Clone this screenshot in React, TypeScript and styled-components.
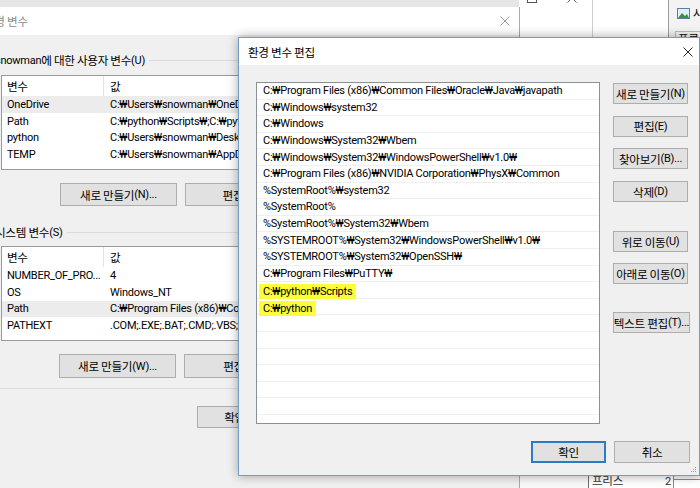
import React from "react";
import styled, { createGlobalStyle } from "styled-components";

const GlobalStyle = createGlobalStyle`
  html, body {
    margin: 0;
    padding: 0;
  }
  body {
    font-family: Roboto, "Noto Sans CJK KR", sans-serif;
    font-size: 11px;
    letter-spacing: -0.25px;
    color: #000;
  }
`;

const Desktop = styled.div`
  position: relative;
  width: 700px;
  height: 488px;
  overflow: hidden;
  background: #e6e6e6;
`;

// Hangul runs get the Korean face, like Malgun Gothic next to Segoe UI
const Ko = styled.span`
  font-family: "Noto Sans CJK KR", sans-serif;
  font-size: 11.6px;
  letter-spacing: -0.3px;
`;

function T({ children }: { children: string }) {
  const parts = children.split(/([가-힣]+(?: [가-힣]+)*)/);
  return <>{parts.map((part, i) => (i % 2 ? <Ko key={i}>{part}</Ko> : part))}</>;
}

/* ---------- explorer window on the right, mostly hidden ---------- */

const Explorer = styled.div`
  position: absolute;
  left: 519px;
  top: -10px;
  width: 190px;
  height: 498px;
  display: flex;
  flex-direction: column;
  background: #fff;
`;

const ExplorerColumns = styled.div`
  flex: 1;
  display: flex;
`;

const Pane = styled.div<{ $width?: number; $bg?: string; $line?: string }>`
  width: ${(p) => (p.$width ? `${p.$width}px` : "auto")};
  flex: ${(p) => (p.$width ? "none" : "1")};
  background: ${(p) => p.$bg || "#fff"};
  border-right: 1px solid ${(p) => p.$line || "#d6d6d6"};
  display: flex;
  flex-direction: column;
`;

const CaptionGlyphs = styled.div`
  height: 13px;
  display: flex;
  align-items: flex-end;
  gap: 30px;
  padding-left: 8px;
`;

const RibbonItem = styled.div`
  margin-top: 16px;
  padding-left: 8px;
  display: flex;
  align-items: center;
  gap: 3px;
  height: 14px;
`;

const RibbonButton = styled.div`
  margin: 11px 0 0 6px;
  height: 16px;
  width: 40px;
  border: 1px solid #b9b9b9;
  background: #f4f4f4;
  line-height: 12px;
  padding-left: 2px;
  overflow: hidden;
`;

const SheetRow = styled.div`
  height: 16px;
  display: flex;
  background: #f7f7f7;
`;

const SheetCell = styled.div<{ $width?: number }>`
  width: ${(p) => (p.$width ? `${p.$width}px` : "auto")};
  flex: ${(p) => (p.$width ? "none" : "1")};
  border-right: 1px solid #8a8a8a;
  display: flex;
  justify-content: space-between;
  align-items: flex-end;
  padding: 0 2px 0 3px;
  color: #333;
  background: #fff;
`;

const EmptyCell = styled.div`
  width: 69px;
  border-right: 1px solid #6f6f6f;
  background: #f9f9f9;
`;

const LastCell = styled.div`
  flex: 1;
  margin-top: 7px;
  border-top: 1px solid #8a8a8a;
  background: #fff;
`;

/* ---------- shared window parts ---------- */

const TitleBar = styled.div<{ $height: number; $inactive?: boolean }>`
  height: ${(p) => p.$height}px;
  flex: none;
  background: #fff;
  display: flex;
  align-items: center;
  justify-content: space-between;
  color: ${(p) => (p.$inactive ? "#8a8a8a" : "#000")};
`;

const TitleText = styled.span<{ $pad: number }>`
  padding-left: ${(p) => p.$pad}px;
`;

const CloseGlyph = styled.svg<{ $right: number }>`
  margin-right: ${(p) => p.$right}px;
  flex: none;
`;

const Button = styled.div<{ $width?: number; $height?: number; $default?: boolean }>`
  box-sizing: border-box;
  width: ${(p) => p.$width ?? 75}px;
  height: ${(p) => p.$height ?? 22}px;
  flex: none;
  background: #e1e1e1;
  border: 1px solid ${(p) => (p.$default ? "#2d7bc4" : "#adadad")};
  box-shadow: ${(p) => (p.$default ? "inset 0 0 0 1px #2d7bc4" : "none")};
  display: flex;
  align-items: center;
  justify-content: center;
  white-space: nowrap;
  overflow: hidden;
`;

/* ---------- environment variables window (behind) ---------- */

const EnvWindow = styled.div`
  position: absolute;
  left: -24px;
  top: 7px;
  width: 544px;
  height: 490px;
  box-sizing: border-box;
  border-right: 1px solid #a9a9a9;
  background: #f0f0f0;
  display: flex;
  flex-direction: column;
`;

const GroupLabel = styled.div<{ $top: number }>`
  margin-top: ${(p) => p.$top}px;
  height: 16px;
  padding-left: 19px;
  padding-right: 12px;
  display: flex;
  align-items: center;
  white-space: nowrap;

  &::after {
    content: "";
    flex: 1;
    margin-left: 4px;
    border-top: 1px solid #dadada;
  }
`;

const VarTable = styled.div<{ $top: number }>`
  margin: ${(p) => p.$top}px 12px 0 25px;
  height: 95px;
  box-sizing: border-box;
  border: 1px solid #9a9a9a;
  background: #fff;
  overflow: hidden;
`;

const VarRow = styled.div<{ $header?: boolean; $selected?: boolean }>`
  height: ${(p) => (p.$header ? 20 : 16.8)}px;
  display: grid;
  grid-template-columns: 102px 1fr;
  background: ${(p) => (p.$selected ? "#ececec" : "#fff")};
`;

const VarCell = styled.div<{ $divider?: boolean }>`
  padding-left: ${(p) => (p.$divider ? 6 : 5)}px;
  display: flex;
  align-items: center;
  white-space: nowrap;
  overflow: hidden;
`;

const HeaderCell = styled(VarCell)`
  border-right: 1px solid #e3e3e3;
  &:last-child {
    border-right: none;
  }
`;

const ButtonRow = styled.div<{ $top: number; $left: number }>`
  margin-top: ${(p) => p.$top}px;
  padding-left: ${(p) => p.$left}px;
  display: flex;
  gap: 8px;
`;

const Separator = styled.div`
  margin: 10px 12px 0 12px;
  border-top: 1px solid #dcdcdc;
`;

/* ---------- edit dialog (front) ---------- */

const Dialog = styled.div`
  position: absolute;
  left: 238px;
  top: 37px;
  width: 462px;
  height: 439px;
  box-sizing: border-box;
  border: 1px solid #6f9fc6;
  background: #f0f0f0;
  box-shadow: 0 0 10px rgba(0, 0, 0, 0.35);
  display: flex;
  flex-direction: column;
`;

const DialogBody = styled.div`
  flex: 1;
  padding: 17px 0 0 17px;
  display: flex;
  flex-direction: column;
`;

const MainRow = styled.div`
  display: flex;
  gap: 13px;
`;

const PathList = styled.div`
  width: 344px;
  height: 342px;
  box-sizing: border-box;
  border: 1px solid #8b8f96;
  background: #fff;
  overflow: hidden;
`;

const PathRow = styled.div`
  height: 16.6px;
  box-sizing: border-box;
  border-bottom: 1px solid #efefef;
  padding-left: 2px;
  display: flex;
  align-items: center;
  white-space: nowrap;
`;

const PathText = styled.span<{ $marked?: boolean }>`
  padding: 0 4px;
  line-height: 15px;
  margin-top: ${(p) => (p.$marked ? 3 : 0)}px;
  background: ${(p) => (p.$marked ? "#fdfd3a" : "transparent")};
`;

const SideButtons = styled.div`
  padding-top: 1px;
  display: flex;
  flex-direction: column;
`;

const SideSlot = styled.div<{ $top: number }>`
  margin-top: ${(p) => p.$top}px;
`;

const Footer = styled.div`
  margin-top: 17px;
  padding-right: 9px;
  display: flex;
  justify-content: flex-end;
  gap: 8px;
`;

const Grip = styled.svg`
  position: absolute;
  right: 2px;
  bottom: 2px;
`;

const paths = [
  "C:₩Program Files (x86)₩Common Files₩Oracle₩Java₩javapath",
  "C:₩Windows₩system32",
  "C:₩Windows",
  "C:₩Windows₩System32₩Wbem",
  "C:₩Windows₩System32₩WindowsPowerShell₩v1.0₩",
  "C:₩Program Files (x86)₩NVIDIA Corporation₩PhysX₩Common",
  "%SystemRoot%₩system32",
  "%SystemRoot%",
  "%SystemRoot%₩System32₩Wbem",
  "%SYSTEMROOT%₩System32₩WindowsPowerShell₩v1.0₩",
  "%SYSTEMROOT%₩System32₩OpenSSH₩",
  "C:₩Program Files₩PuTTY₩",
  "C:₩python₩Scripts",
  "C:₩python",
];

const userVars = [
  ["OneDrive", "C:₩Users₩snowman₩OneDrive"],
  ["Path", "C:₩python₩Scripts₩;C:₩python;C:₩Users₩snowman"],
  ["python", "C:₩Users₩snowman₩Desktop₩python"],
  ["TEMP", "C:₩Users₩snowman₩AppData₩Local₩Temp"],
];

const systemVars = [
  ["NUMBER_OF_PRO...", "4"],
  ["OS", "Windows_NT"],
  ["Path", "C:₩Program Files (x86)₩Common Files₩Oracle₩Java"],
  ["PATHEXT", ".COM;.EXE;.BAT;.CMD;.VBS;.VBE;.JS;.JSE"],
];

const sideButtons: [string, number, number?][] = [
  ["새로 만들기(N)", 0],
  ["편집(E)", 11.7],
  ["찾아보기(B)...", 11.7],
  ["삭제(D)", 11.7],
  ["위로 이동(U)", 29],
  ["아래로 이동(O)", 11],
  ["텍스트 편집(T)...", 28, 77],
];

function Cross({ size, color, right }: { size: number; color: string; right: number }) {
  return (
    <CloseGlyph $right={right} width={size} height={size} viewBox="0 0 10 10">
      <path d="M0.5 0.5 L9.5 9.5 M9.5 0.5 L0.5 9.5" stroke={color} strokeWidth="1" fill="none" />
    </CloseGlyph>
  );
}

function VarBox({ rows, top, selected }: { rows: string[][]; top: number; selected: number }) {
  return (
    <VarTable $top={top}>
      <VarRow $header>
        <HeaderCell>
          <Ko>변수</Ko>
        </HeaderCell>
        <HeaderCell $divider>
          <Ko>값</Ko>
        </HeaderCell>
      </VarRow>
      {rows.map(([name, value], i) => (
        <VarRow key={name} $selected={i === selected}>
          <VarCell>{name}</VarCell>
          <VarCell $divider>{value}</VarCell>
        </VarRow>
      ))}
    </VarTable>
  );
}

export default function App() {
  const rows = [...paths, ...Array(8).fill("")];
  return (
    <>
      <GlobalStyle />
      <Desktop>
        <Explorer>
          <ExplorerColumns>
            <Pane $width={73} $line="#cfcfcf">
              <CaptionGlyphs>
                <svg width="10" height="10" viewBox="0 0 10 10">
                  <rect x="0.5" y="0.5" width="9" height="9" stroke="#555" fill="none" />
                </svg>
                <svg width="10" height="10" viewBox="0 0 10 10">
                  <path d="M0.5 0.5 L9.5 9.5 M9.5 0.5 L0.5 9.5" stroke="#555" fill="none" />
                </svg>
              </CaptionGlyphs>
            </Pane>
            <Pane $width={75} $line="#9c9c9c" />
            <Pane $bg="#f3f3f3">
              <RibbonItem>
                <svg width="13" height="11" viewBox="0 0 13 11">
                  <rect x="0.5" y="0.5" width="12" height="10" fill="#dfeefa" stroke="#5a7fa6" />
                  <path d="M1 10 L5 5 L8 8 L10 6 L12 10 Z" fill="#3f8f3a" />
                </svg>
                <Ko>사진</Ko>
              </RibbonItem>
              <RibbonButton>
                <Ko>프로</Ko>
              </RibbonButton>
            </Pane>
          </ExplorerColumns>
          <SheetRow>
            <EmptyCell />
            <SheetCell $width={79}>
              <Ko>프리스</Ko>
              <span>2</span>
            </SheetCell>
            <LastCell />
          </SheetRow>
        </Explorer>

        <EnvWindow>
          <TitleBar $height={28} $inactive>
            <TitleText $pad={8}>
              <T>환경 변수</T>
            </TitleText>
            <Cross size={10} color="#9a9a9a" right={9} />
          </TitleBar>
          <GroupLabel $top={17}>
            <T>snowman에 대한 사용자 변수(U)</T>
          </GroupLabel>
          <VarBox rows={userVars} top={7} selected={0} />
          <ButtonRow $top={13} $left={84}>
            <Button $width={117} $height={23}><T>새로 만들기(N)...</T></Button>
            <Button $width={117} $height={23}><T>편집(E)...</T></Button>
            <Button $width={117} $height={23}><T>삭제(D)</T></Button>
          </ButtonRow>
          <GroupLabel $top={18}>
            <T>시스템 변수(S)</T>
          </GroupLabel>
          <VarBox rows={systemVars} top={6} selected={2} />
          <ButtonRow $top={13} $left={83}>
            <Button $width={117} $height={24}><T>새로 만들기(W)...</T></Button>
            <Button $width={117} $height={24}><T>편집(I)...</T></Button>
            <Button $width={117} $height={24}><T>삭제(L)</T></Button>
          </ButtonRow>
          <Separator />
          <ButtonRow $top={17} $left={221}>
            <Button $width={75} $height={22}><T>확인</T></Button>
            <Button $width={75} $height={22}><T>취소</T></Button>
          </ButtonRow>
        </EnvWindow>

        <Dialog>
          <TitleBar $height={27}>
            <TitleText $pad={9}>
              <T>환경 변수 편집</T>
            </TitleText>
            <Cross size={10} color="#222" right={6} />
          </TitleBar>
          <DialogBody>
            <MainRow>
              <PathList>
                {rows.map((p, i) => (
                  <PathRow key={i}>
                    <PathText $marked={i >= 12 && i <= 13}>{p}</PathText>
                  </PathRow>
                ))}
              </PathList>
              <SideButtons>
                {sideButtons.map(([label, top, width]) => (
                  <SideSlot key={label} $top={top}>
                    <Button $width={width ?? 75} $height={21}>
                      <T>{label}</T>
                    </Button>
                  </SideSlot>
                ))}
              </SideButtons>
            </MainRow>
            <Footer>
              <Button $default><T>확인</T></Button>
              <Button $width={76}><T>취소</T></Button>
            </Footer>
          </DialogBody>
          <Grip width="6" height="6" viewBox="0 0 6 6">
            <rect x="4" y="0" width="1" height="1" fill="#999" />
            <rect x="2" y="2" width="1" height="1" fill="#999" />
            <rect x="4" y="2" width="1" height="1" fill="#999" />
            <rect x="0" y="4" width="1" height="1" fill="#999" />
            <rect x="2" y="4" width="1" height="1" fill="#999" />
            <rect x="4" y="4" width="1" height="1" fill="#999" />
          </Grip>
        </Dialog>
      </Desktop>
    </>
  );
}
